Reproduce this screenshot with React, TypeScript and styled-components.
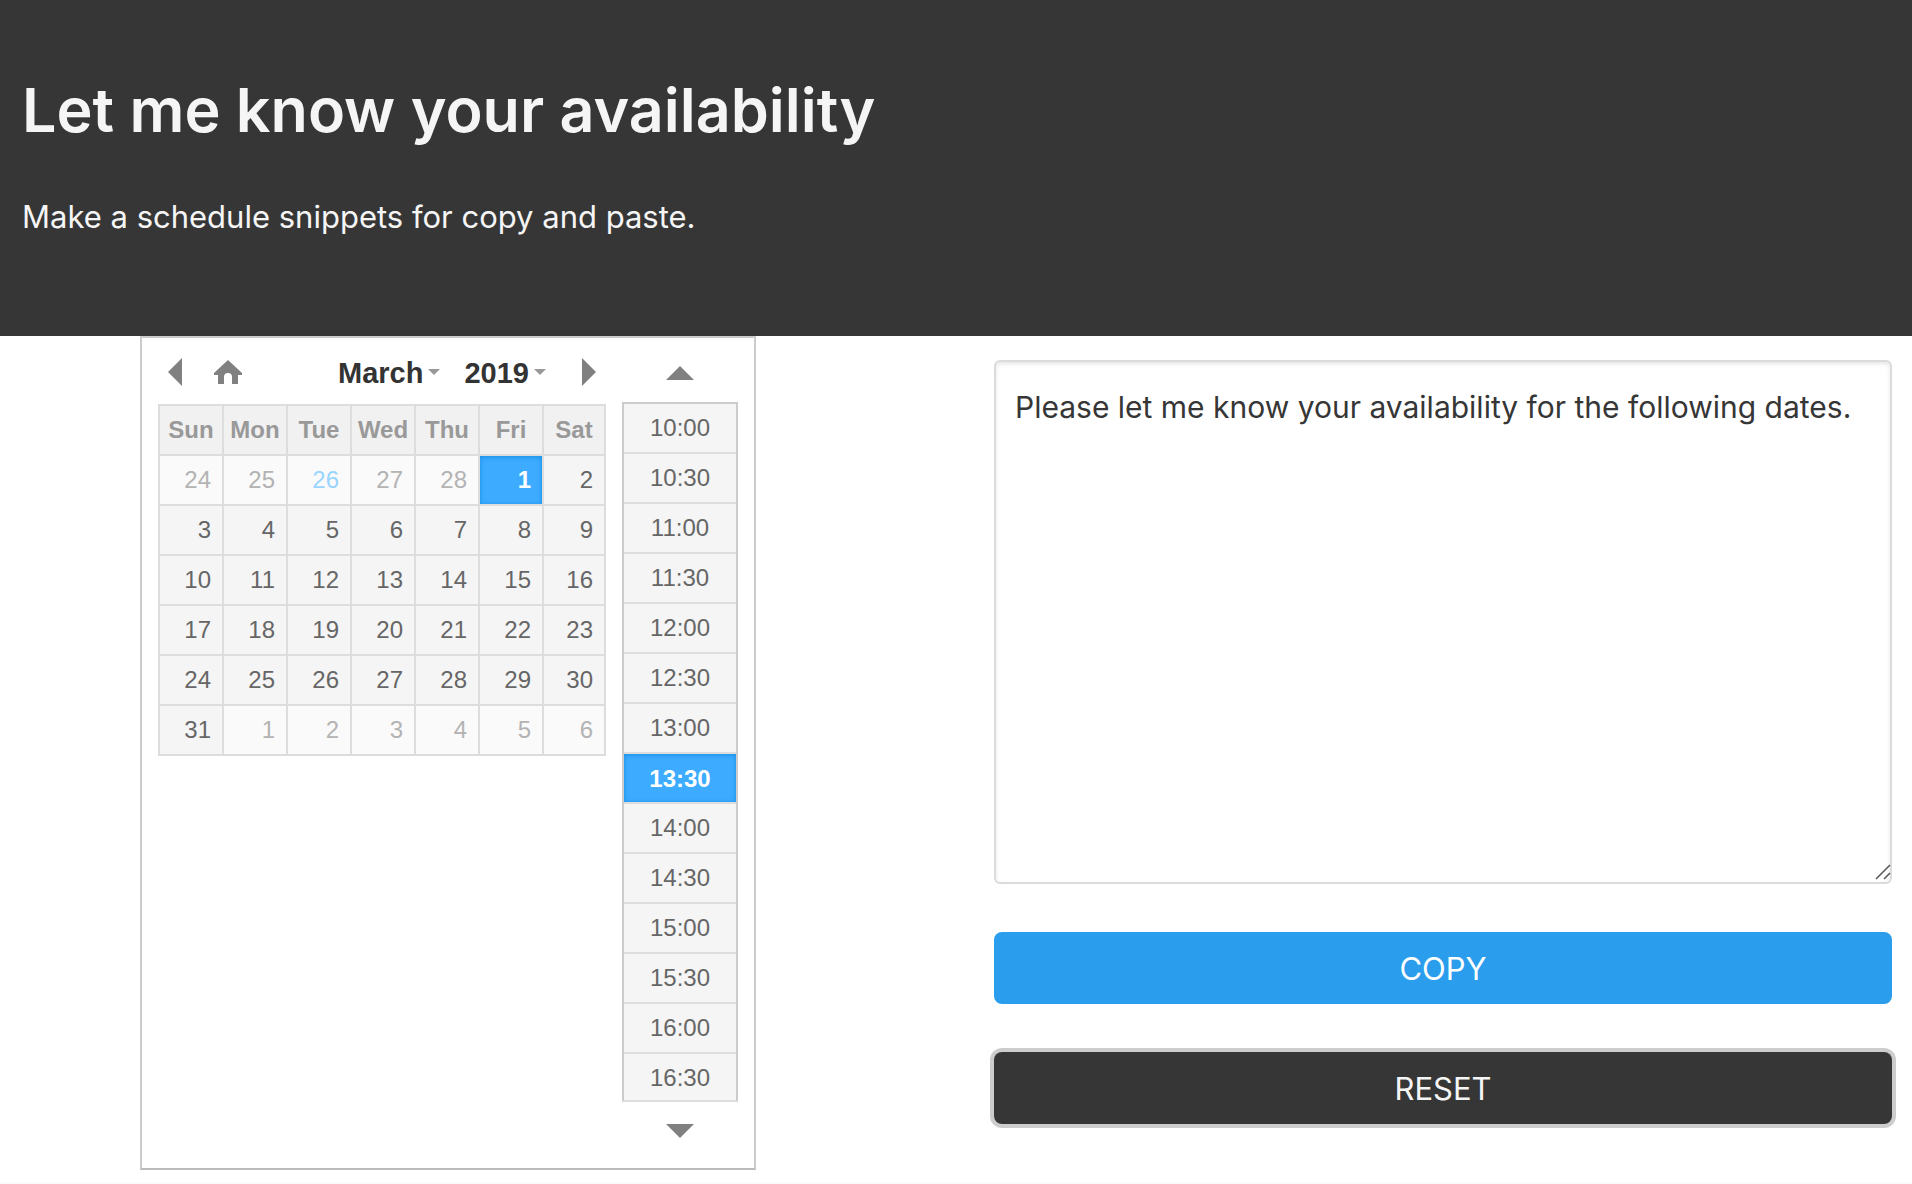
import React, { useState } from "react";
import styled, { createGlobalStyle, css } from "styled-components";

const GlobalStyle = createGlobalStyle`
  *, *::before, *::after { box-sizing: border-box; }
  body {
    margin: 0;
    background: #fff;
    color: #363636;
    font-family: Inter, "Liberation Sans", sans-serif;
  }
  button, select, textarea { font: inherit; color: inherit; margin: 0; }
`;

const Hero = styled.header`
  height: 336px;
  padding: 72px 22px 0;
  background: #363636;
  color: #f5f5f5;
`;

const Title = styled.h1`
  margin: 0;
  font-size: 61px;
  line-height: 76px;
  font-weight: 600;
`;

const Subtitle = styled.p`
  margin: 45px 0 0;
  font-size: 31px;
  line-height: 48px;
`;

const Columns = styled.main`
  display: grid;
  grid-template-columns: 1fr 1fr;
  padding-bottom: 12px;
`;

const PickerColumn = styled.section`
  display: flex;
  justify-content: center;
  align-items: flex-start;
  padding-right: 60px;
`;

const FormColumn = styled.section`
  display: flex;
  flex-direction: column;
  gap: 48px;
  padding: 24px 20px 0 38px;
`;

const Picker = styled.div`
  display: flex;
  gap: 16px;
  padding: 0 16px 30px;
  border: 2px solid #ccc;
  border-bottom-color: #bbb;
  background: #fff;
  color: #333;
  font-family: "Liberation Sans", Arial, sans-serif;
`;

const MonthNav = styled.div`
  display: flex;
  align-items: center;
  height: 66px;
  padding: 2px 10px 0;
`;

const IconButton = styled.button`
  display: flex;
  padding: 0;
  border: 0;
  background: none;
  color: #808080;
  cursor: pointer;
`;

const HomeButton = styled(IconButton)`
  margin-left: 32px;
`;

const NextButton = styled(IconButton)`
  margin-left: auto;
`;

const Selectors = styled.div`
  display: flex;
  gap: 24px;
  margin-left: 96px;
`;

const SelectLabel = styled.label`
  display: flex;
  align-items: center;
  gap: 5px;
  color: #999;
`;

const Select = styled.select`
  appearance: none;
  field-sizing: content;
  padding: 2px 0 0;
  border: 0;
  background: none;
  color: #333;
  font-size: 29px;
  line-height: 32px;
  font-weight: 700;
  cursor: pointer;
`;

const Calendar = styled.table`
  width: 448px;
  table-layout: fixed;
  border-collapse: separate;
  border-spacing: 0;
  border: solid #ddd;
  border-width: 0 2px 2px 0;
  font-size: 24px;
  line-height: 28px;
`;

const Weekday = styled.th`
  width: 64px;
  height: 50px;
  padding: 0;
  border: solid #ddd;
  border-width: 2px 0 0 2px;
  background: #f1f1f1;
  color: #999;
  font-weight: 700;

  &:last-child { width: 62px; }
`;

const DayCell = styled.td`
  height: 50px;
  padding: 0;
  border: solid #ddd;
  border-width: 2px 0 0 2px;
`;

const selected = css`
  background: #3dabff;
  color: #fff;
  font-weight: 700;
  box-shadow: inset 0 1px 5px #178fe5;
`;

const DayButton = styled.button<{ $muted: boolean; $today: boolean; $selected: boolean }>`
  display: block;
  width: 100%;
  height: 48px;
  padding: 0 11px 0 0;
  border: 0;
  background: ${(p) => (p.$muted ? "#fafafa" : "#f5f5f5")};
  color: ${(p) => (p.$today ? "#99d5ff" : p.$muted ? "#b3b3b3" : "#666")};
  text-align: right;
  cursor: pointer;
  ${(p) => p.$selected && selected}
`;

const TimePicker = styled.div`
  display: flex;
  flex-direction: column;
  align-items: center;
  width: 116px;
`;

const TimeArrow = styled(IconButton)<{ $up?: boolean }>`
  padding: ${(p) => (p.$up ? "28px 0 22px" : "22px 0 0")};
`;

const TimeList = styled.div`
  width: 100%;
  height: 700px;
  overflow: hidden;
  border: 2px solid #ccc;
  border-bottom-color: #ddd;
`;

const TimeButton = styled.button<{ $selected: boolean }>`
  display: block;
  width: 100%;
  height: 48px;
  margin-bottom: 2px;
  padding: 0;
  border: 0;
  background: #f5f5f5;
  box-shadow: 0 2px #ddd;
  color: #666;
  font-size: 24px;
  line-height: 28px;
  cursor: pointer;
  ${(p) =>
    p.$selected &&
    css`
      ${selected}
      padding-top: 2px;
      box-shadow: 0 2px #ddd, inset 0 1px 5px #178fe5;
    `}
`;

const MessageField = styled.div`
  position: relative;
  display: flex;
`;

const Message = styled.textarea`
  flex: 1;
  min-width: 0;
  height: 524px;
  padding: 21px 19px;
  border: 2px solid #dbdbdb;
  border-radius: 6px;
  background: #fff;
  box-shadow: inset 0 2px 4px rgba(10, 10, 10, 0.1);
  font-size: 30px;
  line-height: 48px;
  resize: none;
  outline: none;
`;

const ResizeGrip = styled.svg`
  position: absolute;
  right: 1px;
  bottom: 4px;
  pointer-events: none;
`;

const ActionButton = styled.button<{ $tone: "info" | "dark" }>`
  height: 72px;
  padding: 2px 0 0;
  border: 0;
  border-radius: 8px;
  background: ${(p) => (p.$tone === "info" ? "#2a9dec" : "#363636")};
  color: ${(p) => (p.$tone === "info" ? "#fff" : "#f5f5f5")};
  box-shadow: ${(p) => (p.$tone === "dark" ? "0 0 0 4px #cdcdcd" : "none")};
  font-size: 31px;
  line-height: 48px;
  cursor: pointer;
`;

const Footer = styled.footer`
  height: 2px;
  background: #fafafa;
`;

const DEFAULT_MESSAGE = "Please let me know your availability for the following dates.";
const WEEKDAYS = ["Sun", "Mon", "Tue", "Wed", "Thu", "Fri", "Sat"];

// Six weeks starting on Sunday 24 February 2019.
const WEEKS = Array.from({ length: 6 }, (_, w) =>
  Array.from({ length: 7 }, (_, d) => {
    const date = new Date(2019, 1, 24 + w * 7 + d);
    return { day: date.getDate(), month: date.getMonth() };
  })
);

const TIMES = Array.from({ length: 14 }, (_, i) => `${10 + Math.floor(i / 2)}:${i % 2 ? "30" : "00"}`);

const Caret = () => (
  <svg width="12" height="6" viewBox="0 0 12 6" fill="currentColor" aria-hidden="true">
    <path d="M0 0h12L6 6z" />
  </svg>
);

export default function App() {
  const [day, setDay] = useState("2-1");
  const [time, setTime] = useState("13:30");
  const [message, setMessage] = useState(DEFAULT_MESSAGE);

  return (
    <>
      <GlobalStyle />
      <Hero>
        <Title>Let me know your availability</Title>
        <Subtitle>Make a schedule snippets for copy and paste.</Subtitle>
      </Hero>
      <Columns>
        <PickerColumn>
          <Picker>
            <div>
              <MonthNav>
                <IconButton type="button" aria-label="Previous month">
                  <svg width="14" height="28" viewBox="0 0 14 28" fill="currentColor">
                    <path d="M14 0v28L0 14z" />
                  </svg>
                </IconButton>
                <HomeButton type="button" aria-label="Today">
                  <svg width="28" height="24" viewBox="0 0 28 24" fill="currentColor">
                    <path d="M14 0 28 13v2h-4v9h-6v-7a4 4 0 0 0-8 0v7H4v-9H0v-2z" />
                  </svg>
                </HomeButton>
                <Selectors>
                  <SelectLabel>
                    <Select aria-label="Month" defaultValue="March">
                      <option>March</option>
                    </Select>
                    <Caret />
                  </SelectLabel>
                  <SelectLabel>
                    <Select aria-label="Year" defaultValue="2019">
                      <option>2019</option>
                    </Select>
                    <Caret />
                  </SelectLabel>
                </Selectors>
                <NextButton type="button" aria-label="Next month">
                  <svg width="14" height="28" viewBox="0 0 14 28" fill="currentColor">
                    <path d="M0 0v28l14-14z" />
                  </svg>
                </NextButton>
              </MonthNav>
              <Calendar>
                <thead>
                  <tr>
                    {WEEKDAYS.map((name) => (
                      <Weekday key={name} scope="col">{name}</Weekday>
                    ))}
                  </tr>
                </thead>
                <tbody>
                  {WEEKS.map((week, w) => (
                    <tr key={w}>
                      {week.map((d) => {
                        const key = `${d.month}-${d.day}`;
                        return (
                          <DayCell key={key}>
                            <DayButton
                              type="button"
                              $muted={d.month !== 2}
                              $today={key === "1-26"}
                              $selected={key === day}
                              onClick={() => setDay(key)}
                            >
                              {d.day}
                            </DayButton>
                          </DayCell>
                        );
                      })}
                    </tr>
                  ))}
                </tbody>
              </Calendar>
            </div>
            <TimePicker>
              <TimeArrow type="button" $up aria-label="Earlier times">
                <svg width="28" height="14" viewBox="0 0 28 14" fill="currentColor">
                  <path d="M0 14h28L14 0z" />
                </svg>
              </TimeArrow>
              <TimeList>
                {TIMES.map((t) => (
                  <TimeButton key={t} type="button" $selected={t === time} onClick={() => setTime(t)}>
                    {t}
                  </TimeButton>
                ))}
              </TimeList>
              <TimeArrow type="button" aria-label="Later times">
                <svg width="28" height="14" viewBox="0 0 28 14" fill="currentColor">
                  <path d="M0 0h28L14 14z" />
                </svg>
              </TimeArrow>
            </TimePicker>
          </Picker>
        </PickerColumn>
        <FormColumn>
          <MessageField>
            <Message
              aria-label="Message"
              spellCheck={false}
              value={message}
              onChange={(e) => setMessage(e.target.value)}
            />
            <ResizeGrip width="16" height="16" viewBox="0 0 16 16" stroke="#555" strokeWidth="1.5" aria-hidden="true">
              <path d="M1 15 15 1M9 15l6-6" />
            </ResizeGrip>
          </MessageField>
          <ActionButton type="button" $tone="info" onClick={() => navigator.clipboard?.writeText(message)}>
            COPY
          </ActionButton>
          <ActionButton type="button" $tone="dark" onClick={() => setMessage(DEFAULT_MESSAGE)}>
            RESET
          </ActionButton>
        </FormColumn>
      </Columns>
      <Footer />
    </>
  );
}
